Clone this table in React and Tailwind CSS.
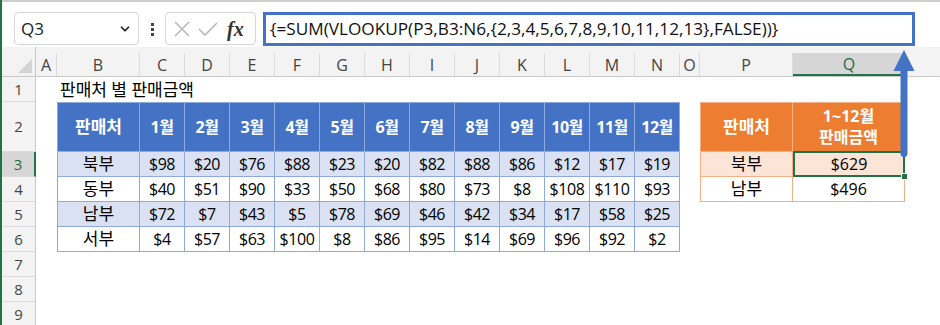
import { ChevronDown } from 'lucide-react'

const COLS = [
  { key: 'A', w: 21 },
  { key: 'B', w: 83 },
  { key: 'C', w: 45 }, { key: 'D', w: 45 }, { key: 'E', w: 45 }, { key: 'F', w: 45 },
  { key: 'G', w: 45 }, { key: 'H', w: 45 }, { key: 'I', w: 45 }, { key: 'J', w: 45 },
  { key: 'K', w: 45 }, { key: 'L', w: 45 }, { key: 'M', w: 45 }, { key: 'N', w: 45 },
  { key: 'O', w: 20 },
  { key: 'P', w: 93 },
  { key: 'Q', w: 112 },
  { key: 'R', w: 37 },
]

const MONTHS = ['1월', '2월', '3월', '4월', '5월', '6월', '7월', '8월', '9월', '10월', '11월', '12월']

const SALES = [
  { name: '북부', vals: [98, 20, 76, 88, 23, 20, 82, 88, 86, 12, 17, 19] },
  { name: '동부', vals: [40, 51, 90, 33, 50, 68, 80, 73, 8, 108, 110, 93] },
  { name: '남부', vals: [72, 7, 43, 5, 78, 69, 46, 42, 34, 17, 58, 25] },
  { name: '서부', vals: [4, 57, 63, 100, 8, 86, 95, 14, 69, 96, 92, 2] },
]

const font = "font-['Open_Sans','Noto_Sans_CJK_KR',sans-serif]"

function RowHead({ n, h, active }) {
  return (
    <div
      className={
        'flex-shrink-0 w-[34px] flex items-center justify-center text-[15px] border-b border-[#dadada] ' +
        (active
          ? 'bg-[#d6d6d6] text-[#1e6b3e] border-r-2 border-r-[#217346]'
          : 'bg-[#f3f3f3] text-[#444] border-r border-r-[#c8c8c8]')
      }
      style={{ height: h }}
    >
      {n}
    </div>
  )
}

function Toolbar() {
  return (
    <div className="h-[47px] bg-white border-t-2 border-[#cfcfcf] flex items-start pt-[10px] pl-[12px]">
      <div className="w-[125px] h-[33px] rounded-[4px] border border-[#d6d6d6] bg-white flex items-center justify-between pl-[6px] pr-[6px]">
        <span className="text-[17px] text-[#222]">Q3</span>
        <ChevronDown className="w-[14px] h-[14px] text-[#222]" strokeWidth={3} />
      </div>
      <div className="ml-[12px] mt-[11px] flex flex-col gap-[2px]">
        <div className="w-[3px] h-[3px] bg-[#444]" />
        <div className="w-[3px] h-[3px] bg-[#444]" />
        <div className="w-[3px] h-[3px] bg-[#444]" />
      </div>
      <div className="ml-[11px] w-[91px] h-[33px] rounded-[4px] border border-[#d6d6d6] bg-white flex items-center pl-[7px]">
        <svg width="18" height="18" viewBox="0 0 18 18" className="text-[#b8b8b8]">
          <path d="M2 2 L16 16 M16 2 L2 16" stroke="currentColor" strokeWidth="1.6" fill="none" />
        </svg>
        <svg width="20" height="16" viewBox="0 0 20 16" className="ml-[7px] text-[#b8b8b8]">
          <path d="M1 8 L7 14 L19 2" stroke="currentColor" strokeWidth="1.6" fill="none" />
        </svg>
        <span className="ml-[9px] font-['Liberation_Serif',serif] italic font-bold text-[20px] text-[#333] leading-none">fx</span>
      </div>
      <div className="ml-[7px] w-[652px] h-[34px] border-[3px] border-[#4472c4] bg-white flex items-center pl-[4px]">
        <span className="text-[17.2px] text-[#111] whitespace-nowrap">
          {'{=SUM(VLOOKUP(P3,B3:N6,{2,3,4,5,6,7,8,9,10,11,12,13},FALSE))}'}
        </span>
      </div>
    </div>
  )
}

function ColumnHeader() {
  return (
    <div className="flex h-[30px] bg-[#f3f3f3] border-b border-[#c8c8c8]">
      <div className="w-[34px] flex-shrink-0 relative border-r border-[#c8c8c8]">
        <svg width="14" height="14" className="absolute right-[3px] bottom-[3px]">
          <path d="M14 0 L14 14 L0 14 Z" fill="#d4d4d4" />
        </svg>
      </div>
      {COLS.map(c =>
        c.key === 'Q' ? (
          <div key={c.key} className="flex-shrink-0 mt-[6px] bg-[#d6d6d6] text-[#1e6b3e] border-b-2 border-[#217346] flex items-center justify-center text-[16px]" style={{ width: c.w }}>
            {c.key}
          </div>
        ) : (
          <div key={c.key} className="flex-shrink-0 mt-[6px] border-r border-[#dcdcdc] text-[#444] flex items-center justify-center text-[16px]" style={{ width: c.w }}>
            {c.key === 'R' ? '' : c.key}
          </div>
        )
      )}
    </div>
  )
}

function Blank({ w }) {
  return <div className="flex-shrink-0" style={{ width: w }} />
}

export default function App() {
  return (
    <div className={'relative w-[940px] h-[325px] overflow-hidden bg-white border-l-2 border-[#217346] ' + font}>
      <Toolbar />
      <ColumnHeader />

      {/* row 1: title */}
      <div className="flex h-[25px]">
        <RowHead n={1} h={25} />
        <Blank w={21} />
        <div className="pl-[3px] text-[17px] leading-[25px] text-black whitespace-nowrap">판매처 별 판매금액</div>
      </div>

      {/* row 2: table headers */}
      <div className="flex h-[50px]">
        <RowHead n={2} h={50} />
        <Blank w={21} />
        <div className="flex-shrink-0 w-[83px] bg-[#4472c4] border border-[#8ea9db] flex items-center justify-center text-white font-bold text-[17px]">
          판매처
        </div>
        {MONTHS.map(m => (
          <div key={m} className="flex-shrink-0 w-[45px] bg-[#4472c4] border-t border-r border-b border-[#8ea9db] flex items-center justify-center text-white font-bold text-[16px] tracking-[-0.5px] whitespace-nowrap">
            {m}
          </div>
        ))}
        <Blank w={20} />
        <div className="flex-shrink-0 w-[93px] bg-[#ed7d31] border border-[#f4b084] flex items-center justify-center text-white font-bold text-[17px]">
          판매처
        </div>
        <div className="flex-shrink-0 w-[112px] bg-[#ed7d31] border-t border-r border-b border-[#f4b084] flex flex-col items-center justify-center text-white font-bold text-[16px] leading-[21px]">
          <span>1~12월</span>
          <span>판매금액</span>
        </div>
      </div>

      {/* rows 3-6: sales data */}
      {SALES.map((r, i) => {
        const band = i % 2 === 0 ? 'bg-[#d9e1f2]' : 'bg-white'
        const right =
          i === 0 ? { name: '북부', total: '$629' } : i === 1 ? { name: '남부', total: '$496' } : null
        return (
          <div key={r.name} className="flex h-[25px]">
            <RowHead n={i + 3} h={25} active={i === 0} />
            <Blank w={21} />
            <div className={'flex-shrink-0 w-[83px] border-l border-r border-b border-[#8ea9db] flex items-center justify-center text-[17px] text-black ' + band}>
              {r.name}
            </div>
            {r.vals.map((v, j) => (
              <div key={j} className={'flex-shrink-0 w-[45px] border-r border-b border-[#8ea9db] flex items-center justify-center text-[16px] text-black tracking-[-0.4px] whitespace-nowrap ' + band}>
                ${v}
              </div>
            ))}
            <Blank w={20} />
            {right && (
              <>
                <div className={'flex-shrink-0 w-[93px] border-l border-r border-b border-[#f4b084] flex items-center justify-center text-[17px] text-black ' + (i === 0 ? 'bg-[#fce4d6]' : 'bg-white')}>
                  {right.name}
                </div>
                {i === 0 ? (
                  <div className="relative flex-shrink-0 w-[112px] -mt-px h-[26px] bg-[#fce4d6] border-2 border-[#217346] flex items-center justify-center text-[16px] text-black">
                    {right.total}
                    <div className="absolute right-[-5px] bottom-[-5px] w-[7px] h-[7px] bg-[#217346] border border-white" />
                  </div>
                ) : (
                  <div className="flex-shrink-0 w-[112px] border-r border-b border-[#f4b084] flex items-center justify-center text-[16px] text-black">
                    {right.total}
                  </div>
                )}
              </>
            )}
          </div>
        )
      })}

      {[7, 8, 9].map(n => (
        <div key={n} className="flex h-[25px]">
          <RowHead n={n} h={25} />
        </div>
      ))}

      {/* callout arrow from Q3 up to the formula bar */}
      <svg width="24" height="112" viewBox="0 0 24 112" className="absolute left-[890px] top-[48px]">
        <path d="M12 2 L22.5 23 L1.5 23 Z" fill="#4472c4" />
        <rect x="8.5" y="20" width="7" height="89" rx="3.5" fill="#4472c4" />
      </svg>
    </div>
  )
}
